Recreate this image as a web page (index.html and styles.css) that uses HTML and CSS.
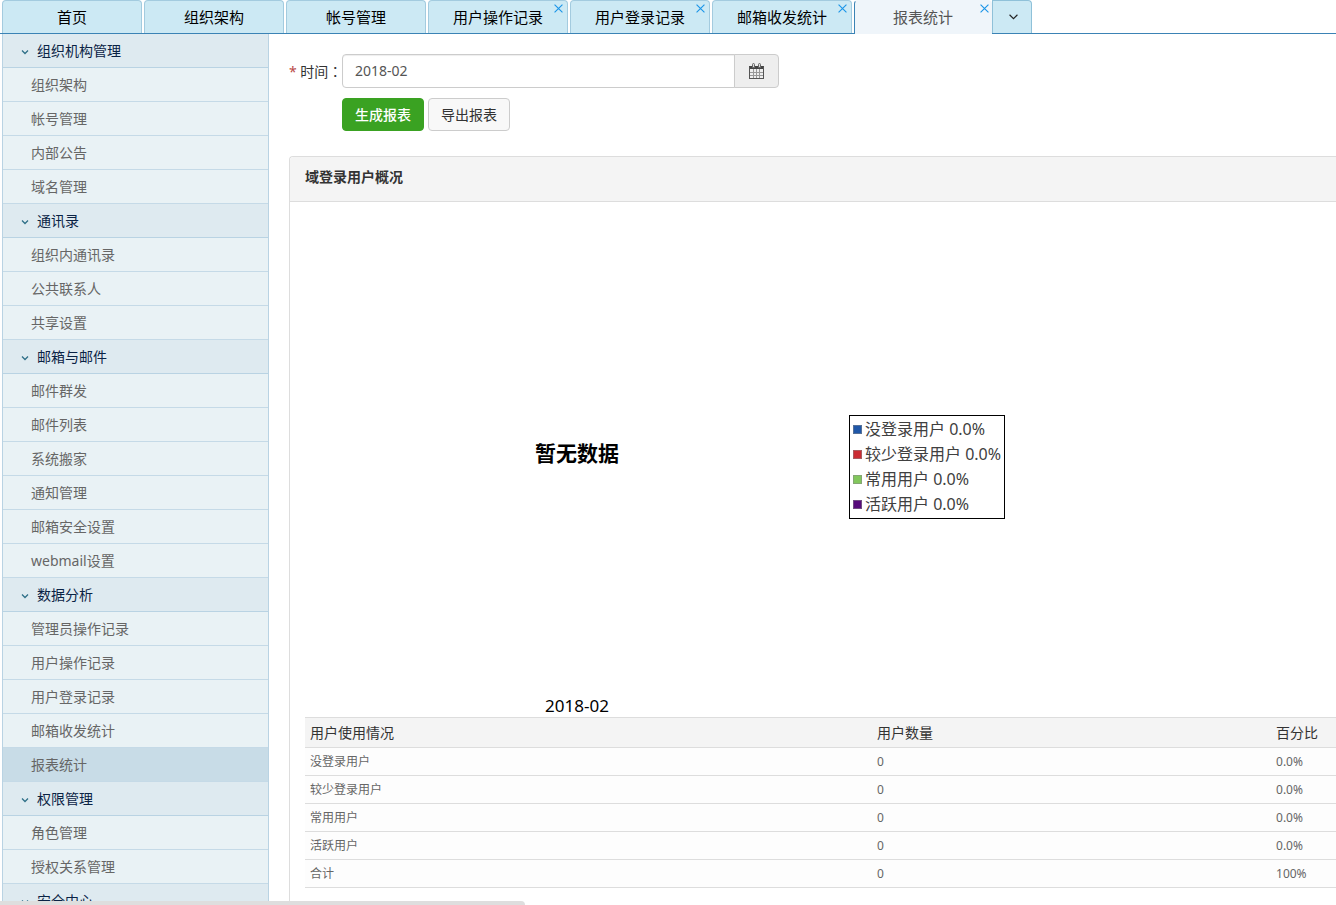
FILE: index.html
```
<!DOCTYPE html>
<html lang="zh-CN">
<head>
<meta charset="utf-8">
<title>报表统计</title>
<link rel="stylesheet" href="styles.css">
</head>
<body>
<div class="shell">
  <header class="tabs">
    <div class="tab"><button type="button" class="tab-name">首页</button></div>
    <div class="tab"><button type="button" class="tab-name">组织架构</button></div>
    <div class="tab"><button type="button" class="tab-name">帐号管理</button></div>
    <div class="tab"><button type="button" class="tab-name">用户操作记录</button><button type="button" class="tab-close" aria-label="关闭"><svg viewBox="0 0 8 8"><path d="M0.5 0.5 7.5 7.5M7.5 0.5 0.5 7.5"/></svg></button></div>
    <div class="tab"><button type="button" class="tab-name">用户登录记录</button><button type="button" class="tab-close" aria-label="关闭"><svg viewBox="0 0 8 8"><path d="M0.5 0.5 7.5 7.5M7.5 0.5 0.5 7.5"/></svg></button></div>
    <div class="tab"><button type="button" class="tab-name">邮箱收发统计</button><button type="button" class="tab-close" aria-label="关闭"><svg viewBox="0 0 8 8"><path d="M0.5 0.5 7.5 7.5M7.5 0.5 0.5 7.5"/></svg></button></div>
    <div class="tab tab-active"><button type="button" class="tab-name">报表统计</button><button type="button" class="tab-close" aria-label="关闭"><svg viewBox="0 0 8 8"><path d="M0.5 0.5 7.5 7.5M7.5 0.5 0.5 7.5"/></svg></button></div>
    <button type="button" class="tab-more" aria-label="更多"><svg viewBox="0 0 8 5"><path d="M0.5 0.5 4 4 7.5 0.5"/></svg></button>
  </header>
  <div class="body">
    <nav class="side">
      <button type="button" class="group"><svg viewBox="0 0 8 6"><path d="M1 1.500 4 4.500 7 1.500"/></svg>组织机构管理</button>
      <a class="item" href="#">组织架构</a>
      <a class="item" href="#">帐号管理</a>
      <a class="item" href="#">内部公告</a>
      <a class="item" href="#">域名管理</a>
      <button type="button" class="group"><svg viewBox="0 0 8 6"><path d="M1 1.500 4 4.500 7 1.500"/></svg>通讯录</button>
      <a class="item" href="#">组织内通讯录</a>
      <a class="item" href="#">公共联系人</a>
      <a class="item" href="#">共享设置</a>
      <button type="button" class="group"><svg viewBox="0 0 8 6"><path d="M1 1.500 4 4.500 7 1.500"/></svg>邮箱与邮件</button>
      <a class="item" href="#">邮件群发</a>
      <a class="item" href="#">邮件列表</a>
      <a class="item" href="#">系统搬家</a>
      <a class="item" href="#">通知管理</a>
      <a class="item" href="#">邮箱安全设置</a>
      <a class="item" href="#">webmail设置</a>
      <button type="button" class="group"><svg viewBox="0 0 8 6"><path d="M1 1.500 4 4.500 7 1.500"/></svg>数据分析</button>
      <a class="item" href="#">管理员操作记录</a>
      <a class="item" href="#">用户操作记录</a>
      <a class="item" href="#">用户登录记录</a>
      <a class="item" href="#">邮箱收发统计</a>
      <a class="item item-current" href="#">报表统计</a>
      <button type="button" class="group"><svg viewBox="0 0 8 6"><path d="M1 1.500 4 4.500 7 1.500"/></svg>权限管理</button>
      <a class="item" href="#">角色管理</a>
      <a class="item" href="#">授权关系管理</a>
      <button type="button" class="group"><svg viewBox="0 0 8 6"><path d="M1 1.500 4 4.500 7 1.500"/></svg>安全中心</button>
    </nav>
    <main class="main">
      <form class="form">
        <label class="form-label" for="month"><span class="required">*</span> 时间<span class="colon" lang="zh-TW">：</span></label>
        <div class="date">
          <input id="month" class="date-input" type="text" value="2018-02">
          <button type="button" class="date-button" aria-label="选择时间"><svg viewBox="0 0 16 16"><path class="cal-fill" d="M0 3h15v3H0z"/><path d="M0.5 3.500v12h14v-12M0 15.500h15"/><path class="cal-grid" d="M1 9.500h13M1 12.500h13M4.500 6v9M7.500 6v9M10.500 6v9"/><path class="cal-ring" d="M3.500 4.500V1.500q0-1 1-1t1 1V4.500zM9.500 4.500V1.500q0-1 1-1t1 1V4.500z"/></svg></button>
        </div>
        <div class="actions">
          <button type="button" class="btn btn-primary">生成报表</button>
          <button type="button" class="btn">导出报表</button>
        </div>
      </form>
      <section class="panel">
        <h2 class="panel-title">域登录用户概况</h2>
        <div class="panel-body">
          <div class="chart">
            <div class="plot">暂无数据</div>
            <div class="caption">2018-02</div>
            <ul class="legend">
              <li><i class="swatch blue"></i>没登录用户 0.0%</li>
              <li><i class="swatch red"></i>较少登录用户 0.0%</li>
              <li><i class="swatch green"></i>常用用户 0.0%</li>
              <li><i class="swatch purple"></i>活跃用户 0.0%</li>
            </ul>
          </div>
          <table class="usage">
            <thead><tr><th class="col-name">用户使用情况</th><th class="col-count">用户数量</th><th>百分比</th></tr></thead>
            <tbody>
              <tr><td>没登录用户</td><td>0</td><td>0.0%</td></tr>
              <tr><td>较少登录用户</td><td>0</td><td>0.0%</td></tr>
              <tr><td>常用用户</td><td>0</td><td>0.0%</td></tr>
              <tr><td>活跃用户</td><td>0</td><td>0.0%</td></tr>
              <tr><td>合计</td><td>0</td><td>100%</td></tr>
            </tbody>
          </table>
        </div>
      </section>
    </main>
  </div>
  <div class="status"></div>
</div>
</body>
</html>
```
FILE: styles.css
```
* { box-sizing: border-box; }
body {
  margin: 0;
  background: #fff;
  color: #333;
  font: 14px/20px "Noto Sans", "Noto Sans CJK SC", sans-serif;
}
button, input { font: inherit; color: inherit; margin: 0; }
svg { fill: none; stroke: currentColor; display: block; }

.shell {
  position: relative;
  height: 100vh;
  display: flex;
  flex-direction: column;
  overflow: hidden;
}

/* tabs */
.tabs {
  flex: none;
  display: flex;
  gap: 2px;
  height: 34px;
  padding-left: 2px;
  border-bottom: 1px solid #3b83b5;
}
.tab {
  position: relative;
  width: 140px;
  background: #cce9f4;
  border: 1px solid #a3cbdf;
  border-bottom: 0;
  border-radius: 4px 4px 0 0;
  color: #000;
}
.tab-name {
  width: 100%;
  height: 32px;
  padding: 0;
  border: 0;
  background: none;
  font-size: 15px;
}
.tab-close {
  position: absolute;
  top: 3px;
  right: 4px;
  padding: 0;
  border: 0;
  background: none;
  color: #1b95e8;
}
.tab-close svg { width: 9px; height: 9px; }
.tab-active {
  width: 138px;
  height: 34px;
  background: #eff5fa;
  border-color: #eff5fa;
  border-left-color: #3b83b5;
  color: #555;
}
.tab-active .tab-close { right: 2px; }
.tab-more {
  width: 40px;
  margin-left: -2px;
  display: grid;
  place-items: center;
  padding: 0 0 0 3px;
  background: #cce9f4;
  border: 1px solid #8fc1d9;
  border-bottom: 0;
  border-radius: 0 4px 0 0;
  color: #222;
}
.tab-more svg { width: 9px; height: 6px; }

/* side menu */
.body { flex: 1; min-height: 0; display: flex; }
.side {
  flex: none;
  width: 267px;
  margin-left: 2px;
  border: solid #b9d3e3;
  border-width: 0 1px;
  overflow: hidden;
}
.group, .item {
  display: flex;
  align-items: center;
  width: 100%;
  height: 34px;
  border: 0;
  border-bottom: 1px solid #c5dae7;
}
.group {
  gap: 8px;
  padding: 0 0 0 18px;
  background: #deeaf0;
  border-color: #b9d3e3;
  color: #0a2345;
}
.group svg { width: 8px; height: 6px; margin-top: 2px; color: #2f7088; stroke-width: 1.3; }
.item {
  padding-left: 28px;
  background: #e9f2f5;
  color: #666;
  text-decoration: none;
}
.item-current { background: #c8dce7; }

/* content */
.main { flex: 1; min-width: 0; padding: 20px 0 0 20px; overflow: hidden; }
.form {
  display: grid;
  grid-template-columns: 53px minmax(0, 437px);
  row-gap: 10px;
  align-items: center;
}
.form-label { white-space: nowrap; }
.required { color: #b94a48; }
.colon { font-family: "Noto Sans CJK TC", sans-serif; }
.date { display: flex; height: 34px; }
.date-input {
  flex: 1;
  min-width: 0;
  padding: 0 12px;
  border: 1px solid #ccc;
  border-radius: 4px 0 0 4px;
  box-shadow: inset 0 1px 1px #eee;
  color: #555;
}
.date-button {
  width: 45px;
  margin-left: -1px;
  display: grid;
  place-items: center;
  padding: 0;
  border: 1px solid #ccc;
  border-radius: 0 4px 4px 0;
  background: #eee;
  color: #555;
}
.date-button svg { width: 16px; height: 16px; }
.cal-fill { fill: #444; stroke: none; }
.cal-grid { stroke: #999; }
.cal-ring { fill: #ddd; stroke: #666; }
.actions { grid-column: 2; display: flex; gap: 4px; }
.btn {
  width: 82px;
  height: 33px;
  padding: 0;
  border: 1px solid #ccc;
  border-radius: 4px;
  background: #f8f8f8;
}
.btn-primary { background: #3aa222; border-color: #3aa222; color: #fff; font-weight: 500; }

.panel {
  margin-top: 25px;
  border: solid #ddd;
  border-width: 1px 0 0 1px;
  border-radius: 4px 0 0 0;
}
.panel-title {
  margin: 0;
  padding: 10px 15px 14px;
  border-bottom: 1px solid #ddd;
  border-radius: 4px 0 0 0;
  background: #f4f4f4;
  font-size: 14px;
  line-height: 20px;
}
.panel-body { padding: 15px 0 30px 15px; }
.chart {
  display: grid;
  grid-template: 472px 28px / 544px max-content;
  color: #000;
}
.plot {
  display: grid;
  place-items: center;
  font-size: 21px;
  font-weight: 600;
}
.caption {
  padding-top: 6px;
  font-size: 17px;
  line-height: 22px;
  text-align: center;
}
.legend {
  grid-area: 1 / 2 / 3 / 3;
  align-self: center;
  margin: 0;
  padding: 1px 3px;
  border: 1px solid #000;
  list-style: none;
  color: #404040;
  font-size: 16px;
  line-height: 25px;
}
.legend li { display: flex; align-items: center; gap: 3px; }
.swatch { width: 9px; height: 9px; border: 1px solid #8888; }
.blue { background: #1f57a8; }
.red { background: #cb2c33; }
.green { background: #82c75c; }
.purple { background: #570a7b; }

.usage { width: 100%; table-layout: fixed; border-collapse: collapse; }
.usage th, .usage td {
  border: solid #ddd;
  border-width: 1px 0;
  text-align: left;
}
.usage th { height: 30px; padding: 0 5px; background: #f4f4f4; font-weight: 400; }
.usage td { height: 28px; padding: 0 5px; background: #fdfdfd; color: #666; font-size: 12px; }
.usage .col-name { width: 55%; }
.usage .col-count { width: 38.7%; }

/* link preview strip at the window's foot */
.status {
  position: absolute;
  left: 0;
  bottom: 0;
  width: 525px;
  height: 4px;
  border-radius: 0 4px 0 0;
  background: #dedede;
}
```
